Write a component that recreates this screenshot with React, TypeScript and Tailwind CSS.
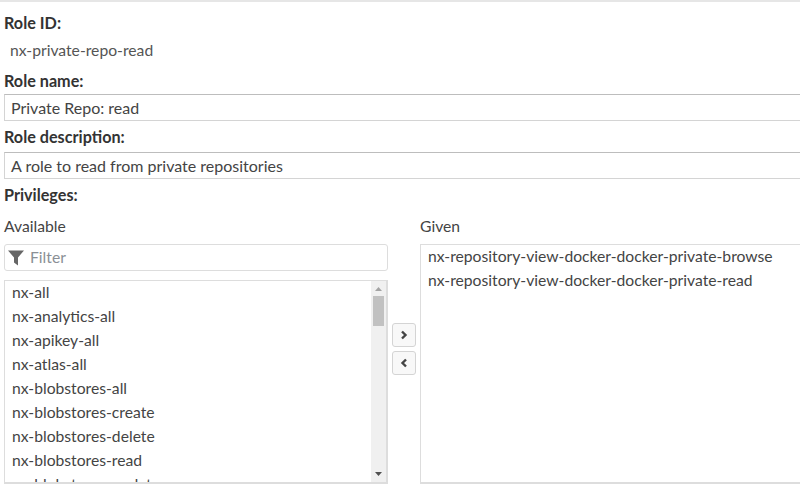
const available = [
  'nx-all',
  'nx-analytics-all',
  'nx-apikey-all',
  'nx-atlas-all',
  'nx-blobstores-all',
  'nx-blobstores-create',
  'nx-blobstores-delete',
  'nx-blobstores-read',
  'nx-blobstores-update',
];

const given = [
  'nx-repository-view-docker-docker-private-browse',
  'nx-repository-view-docker-docker-private-read',
];

const Label = ({ text }: { text: string }) => (
  <p className="h-[24px] leading-[24px] text-[16.2px] font-bold text-[#333333]">{text}</p>
);

const App = () => {
  return (
    <div className="w-[800px] h-[492px] overflow-hidden bg-white text-[15.7px] text-[#444444] font-['Lato',sans-serif] border-t-2 border-[#e6e6e6]">
      <div className="w-[830px] pl-1 pt-[9px]">
        <Label text="Role ID:" />
        <p className="h-[26px] pt-[3px] pl-[6px] leading-[24px] text-[#555555]">nx-private-repo-read</p>
        <div className="mt-[8px]">
          <Label text="Role name:" />
        </div>
        <div className="h-[27px] mt-[1px] pl-[6px] leading-[26px] text-[16px] border border-[#d4d4d4] border-t-[#bdbdbd]">
          Private Repo: read
        </div>
        <div className="mt-[4px]">
          <Label text="Role description:" />
        </div>
        <div className="h-[27px] mt-[3px] pl-[6px] leading-[26px] text-[16px] border border-[#d4d4d4] border-t-[#bdbdbd]">
          A role to read from private repositories
        </div>
        <div className="mt-[4px]">
          <Label text="Privileges:" />
        </div>
        <div className="flex mt-[7px]">
          <div className="w-[384px]">
            <p className="h-[24px] leading-[24px]">Available</p>
            <div className="flex items-center h-[27px] mt-[6px] pl-[3px] gap-[6px] border border-[#dddddd] rounded-[3px]">
              <svg width="16" height="16" viewBox="0 0 16 16">
                <path d="M0 0.5H16L10 7.5V15.5L6 12.5V7.5z" fill="#666666" />
              </svg>
              <span className="text-[#8a8f96]">Filter</span>
            </div>
            <div className="relative h-[204px] mt-[9px] overflow-hidden border-2 border-t border-l border-[#dddddd]">
              <div className="pl-[7px] -mt-[1px]">
                {available.map((item) => (
                  <p key={item} className="h-[24px] leading-[24px]">{item}</p>
                ))}
              </div>
              <div className="absolute top-0 right-0 bottom-0 w-[15px] bg-[#f0f0f0]">
                <div className="mt-[15px] mx-[2px] h-[30px] bg-[#c1c1c1]" />
                <svg className="absolute top-[6px] left-[4px]" width="7" height="4" viewBox="0 0 7 4">
                  <path d="M3.5 0L7 4H0z" fill="#a3a3a3" />
                </svg>
                <svg className="absolute bottom-[6px] left-[4px]" width="7" height="4" viewBox="0 0 7 4">
                  <path d="M0 0H7L3.5 4z" fill="#505050" />
                </svg>
              </div>
            </div>
          </div>
          <div className="w-[32px] flex flex-col items-center gap-[4px] pt-[79px] mt-[30px]">
            {['M4 2.5l3.5 3.5L4 9.5', 'M8 2.5L4.5 6 8 9.5'].map((d) => (
              <button key={d} className="flex items-center justify-center w-[24px] h-[24px] bg-[#f8f8f8] border border-[#d4d4d4] rounded-[3px]">
                <svg width="12" height="12" viewBox="0 0 12 12" fill="none">
                  <path d={d} stroke="#444444" strokeWidth="2.4" />
                </svg>
              </button>
            ))}
          </div>
          <div className="flex-1 min-w-0">
            <p className="h-[24px] leading-[24px]">Given</p>
            <div className="h-[240px] mt-[6px] pl-[7px] border border-[#dddddd] border-b-2">
              <div className="-mt-[1px]">
                {given.map((item) => (
                  <p key={item} className="h-[24px] leading-[24px] whitespace-nowrap">{item}</p>
                ))}
              </div>
            </div>
          </div>
        </div>
      </div>
    </div>
  );
};

export default App;
